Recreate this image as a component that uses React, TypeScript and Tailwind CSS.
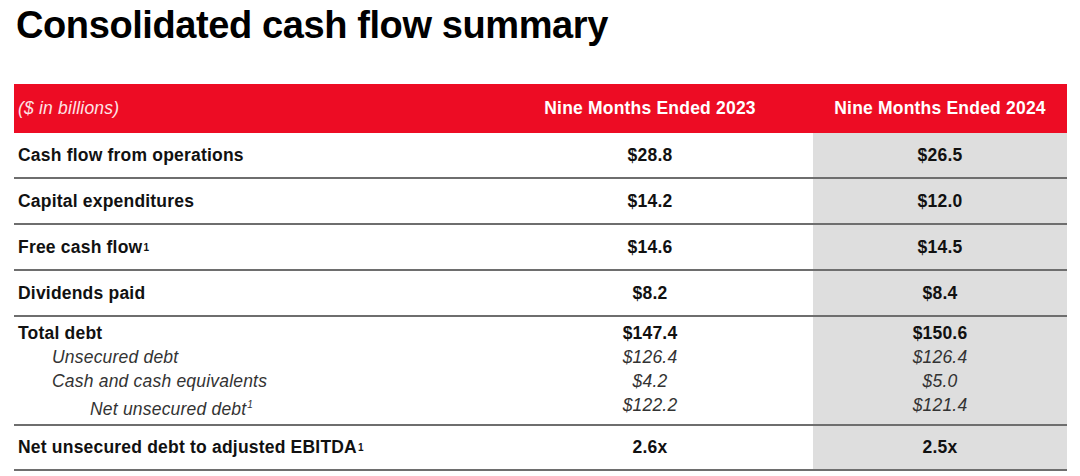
import React from "react";

const font = { fontFamily: '"Liberation Sans", Arial, sans-serif' };

function Sup() {
  return <span className="text-[10px] align-[7px] ml-[1px]">1</span>;
}

type Row = { label: React.ReactNode; a: string; b: string };

const simple: Row[] = [
  { label: "Cash flow from operations", a: "$28.8", b: "$26.5" },
  { label: "Capital expenditures", a: "$14.2", b: "$12.0" },
  { label: <>Free cash flow<Sup /></>, a: "$14.6", b: "$14.5" },
  { label: "Dividends paid", a: "$8.2", b: "$8.4" },
];

export default function App() {
  return (
    <div className="w-[1080px] h-[476px] bg-white overflow-hidden text-[#111] text-[17.5px] tracking-[0.2px]" style={font}>
      <h1 className="pl-[16px] pt-[3px] h-[84px] text-[38px] leading-[44px] font-bold tracking-[-0.4px] text-black">
        Consolidated cash flow summary
      </h1>
      <div className="ml-[14px] w-[1053px]">
        <div className="flex h-[49px] bg-[#ed0c24] text-white font-bold items-center">
          <div className="w-[473px] pl-[4px] italic font-normal text-[#fde4e6]">($ in billions)</div>
          <div className="w-[326px] text-center">Nine Months Ended 2023</div>
          <div className="w-[254px] text-center">Nine Months Ended 2024</div>
        </div>
        {simple.map((r, i) => (
          <div key={i} className="flex h-[46px] border-b-2 border-[#6e6e6e] font-bold">
            <div className="w-[473px] pl-[4px] flex items-center">{r.label}</div>
            <div className="w-[326px] flex items-center justify-center">{r.a}</div>
            <div className="w-[254px] flex items-center justify-center bg-[#dedede]">{r.b}</div>
          </div>
        ))}
        <div className="flex h-[109px] border-b-2 border-[#6e6e6e] leading-[24px]">
          <div className="w-[473px] pl-[4px] pt-[4px]">
            <div className="font-bold">Total debt</div>
            <div className="italic text-[#333] pl-[34px]">Unsecured debt</div>
            <div className="italic text-[#333] pl-[34px]">Cash and cash equivalents</div>
            <div className="italic text-[#333] pl-[72px]">Net unsecured debt<Sup /></div>
          </div>
          <div className="w-[326px] pt-[4px] text-center">
            <div className="font-bold">$147.4</div>
            <div className="italic text-[#333]">$126.4</div>
            <div className="italic text-[#333]">$4.2</div>
            <div className="italic text-[#333]">$122.2</div>
          </div>
          <div className="w-[254px] pt-[4px] text-center bg-[#dedede]">
            <div className="font-bold">$150.6</div>
            <div className="italic text-[#333]">$126.4</div>
            <div className="italic text-[#333]">$5.0</div>
            <div className="italic text-[#333]">$121.4</div>
          </div>
        </div>
        <div className="flex h-[45px] border-b-2 border-[#6e6e6e] font-bold">
          <div className="w-[473px] pl-[4px] flex items-center">
            Net unsecured debt to adjusted EBITDA<Sup />
          </div>
          <div className="w-[326px] flex items-center justify-center">2.6x</div>
          <div className="w-[254px] flex items-center justify-center bg-[#dedede]">2.5x</div>
        </div>
      </div>
    </div>
  );
}
